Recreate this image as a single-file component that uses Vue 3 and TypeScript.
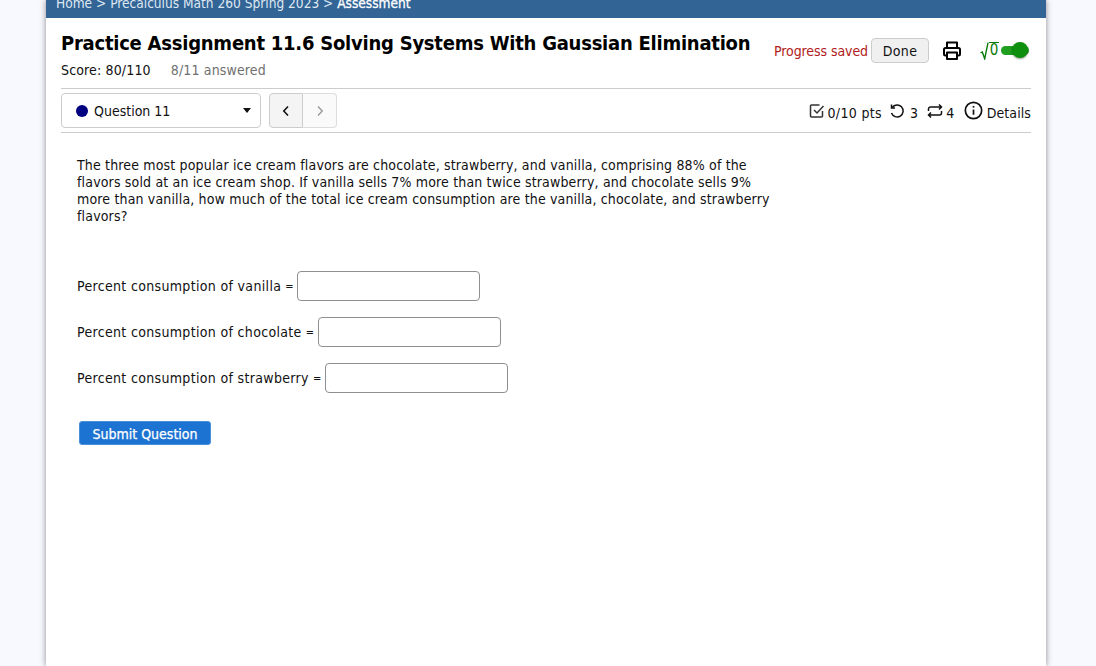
<template>
  <div class="page">
    <main class="container">
      <nav class="breadcrumb">
        <span>Home &gt; Precalculus Math 260 Spring 2023 &gt; </span><b>Assessment</b>
      </nav>
      <div class="content">
        <header class="head">
          <div class="head-left">
            <h1>Practice Assignment 11.6 Solving Systems With Gaussian Elimination</h1>
            <div class="score">
              <span>Score: 80/110</span>
              <span class="answered">8/11 answered</span>
            </div>
          </div>
          <div class="head-right">
            <span class="saved">Progress saved</span>
            <button class="done">Done</button>
            <svg class="print" width="18" height="19" viewBox="0 0 18 19" fill="none" stroke="#000" stroke-width="2" stroke-linejoin="round">
              <path d="M4 7V1.500h10V7" />
              <path d="M4 14.500H2.500A1.500 1.500 0 0 1 1 13V8.500A1.500 1.500 0 0 1 2.500 7h13A1.500 1.500 0 0 1 17 8.500V13a1.500 1.500 0 0 1-1.500 1.500H14" />
              <rect x="4" y="11.500" width="10" height="6.500" />
            </svg>
            <span class="math">
              <svg width="9" height="18" viewBox="0 0 9 18" fill="none" stroke="#0a7a0a" stroke-width="1.400"><path d="M0.500 11l1.800-1l2.400 6.800l3.300-16.100" /></svg>
              <span class="zero">0</span>
            </span>
            <span class="toggle"><span class="knob"></span></span>
          </div>
        </header>

        <div class="toolbar">
          <div class="select">
            <span class="dot"></span>
            <span class="select-label">Question 11</span>
            <span class="caret"></span>
          </div>
          <div class="pager">
            <button class="prev">
              <svg width="8" height="12" viewBox="0 0 8 12" fill="none" stroke="#111" stroke-width="1.600"><path d="M6 1.500L1.800 6L6 10.500" /></svg>
            </button>
            <button class="next">
              <svg width="8" height="12" viewBox="0 0 8 12" fill="none" stroke="#999" stroke-width="1.400"><path d="M2 1.500L6.200 6L2 10.500" /></svg>
            </button>
          </div>
          <div class="stats">
            <svg width="16" height="16" viewBox="0 0 16 16" fill="none" stroke="#333" stroke-width="1.500"><path d="M13.500 8v5a1 1 0 0 1-1 1H2.500a1 1 0 0 1-1-1V3a1 1 0 0 1 1-1h8" /><path d="M5 7l3 3l6.500-7" /></svg>
            <span class="stat-text">0/10 pts</span>
            <svg class="gap" width="16" height="16" viewBox="0 0 16 16" fill="none" stroke="#111" stroke-width="1.500"><path d="M3.200 4.500A6 6 0 1 1 2.500 10" /><path d="M2.500 1.500v3.500h3.500" /></svg>
            <span class="stat-text tight">3</span>
            <svg class="gap wide" width="16" height="16" viewBox="0 0 16 16" fill="none" stroke="#111" stroke-width="1.500"><path d="M1.500 8V6a2 2 0 0 1 2-2h11M12 1.500L14.500 4L12 6.500" /><path d="M14.500 8v2a2 2 0 0 1-2 2h-11M4 9.500L1.500 12L4 14.500" /></svg>
            <span class="stat-text">4</span>
            <svg class="gap wide info" width="19" height="19" viewBox="0 0 20 20" fill="none" stroke="#111" stroke-width="1.800"><circle cx="10" cy="10" r="8.600" /><path d="M10 9v5.500" /><path d="M10 5.200v1.800" /></svg>
            <span class="stat-text details">Details</span>
          </div>
        </div>

        <section class="question">
          <p class="prompt">The three most popular ice cream flavors are chocolate, strawberry, and vanilla, comprising 88% of the flavors sold at an ice cream shop. If vanilla sells 7% more than twice strawberry, and chocolate sells 9% more than vanilla, how much of the total ice cream consumption are the vanilla, chocolate, and strawberry flavors?</p>
          <div class="fields">
            <label v-for="f in fields" :key="f" class="field">
              <span>Percent consumption of {{ f }}</span>
              <span class="eq">=</span>
              <input type="text" />
            </label>
          </div>
          <button class="submit">Submit Question</button>
        </section>
      </div>
    </main>
  </div>
</template>

<script setup lang="ts">
const fields: string[] = ['vanilla', 'chocolate', 'strawberry']
</script>

<style>
html, body { margin: 0; background: #f8f8ff; }
</style>

<style scoped>
.page {
  height: 666px;
  overflow: hidden;
  background: #f8f8ff;
  font-family: "DejaVu Sans Condensed", "DejaVu Sans", sans-serif;
  font-size: 14px;
  letter-spacing: 0.33px;
  color: #111;
}
.container {
  width: 1000px;
  height: 666px;
  margin-left: 46px;
  background: #fff;
  box-shadow: 0 0 6px rgba(0, 0, 0, 0.45);
}
.breadcrumb {
  height: 18px;
  box-sizing: border-box;
  padding-left: 10px;
  background: #326496;
  color: #dfe8f1;
  font-size: 13.6px;
  letter-spacing: 0;
  line-height: 6px;
  overflow: hidden;
  white-space: nowrap;
}
.breadcrumb b { color: #fff; font-weight: 400; -webkit-text-stroke: 0.3px #fff; }
.content { padding: 0 15px; }
.head {
  display: flex;
  align-items: flex-start;
  height: 70px;
  border-bottom: 1px solid #ccc;
}
.head-left { padding-top: 12px; }
h1 {
  margin: 0;
  font-size: 20px;
  letter-spacing: -0.24px;
  line-height: 27px;
  font-weight: 700;
  color: #000;
  white-space: nowrap;
}
.score { margin-top: 5px; display: flex; gap: 20px; line-height: 17px; letter-spacing: 0.15px; }
.answered { color: #707070; }
.head-right {
  display: flex;
  align-items: center;
  flex-shrink: 0;
  margin-left: auto;
  margin-top: 20px;
  height: 25px;
}
.saved { color: #b01c20; margin-right: 3px; white-space: nowrap; letter-spacing: -0.08px; }
.done {
  width: 58px;
  height: 25px;
  padding: 0;
  background: #f0f0f0;
  border: 1px solid #ccc;
  border-radius: 4px;
  font: inherit;
  letter-spacing: inherit;
  color: #111;
}
.print { margin-left: 14px; }
.math { display: flex; align-items: center; margin-left: 19px; color: #0a7a0a; font-size: 15px; letter-spacing: 0; }
.zero {
  width: 10px;
  height: 15px;
  margin-top: -1px;
  border-top: 1.400px solid #0a7a0a;
  line-height: 15px;
  text-align: center;
}
.toggle {
  position: relative;
  width: 28px;
  height: 9px;
  margin-left: 2px;
  margin-right: 2px;
  border-radius: 5px;
  background: #1f9e1f;
}
.knob {
  position: absolute;
  right: 1px;
  top: -4px;
  width: 16px;
  height: 16px;
  border-radius: 50%;
  background: #0e8f0e;
  box-shadow: 0 1px 2px rgba(0,0,0,.4);
}
.toolbar {
  display: flex;
  align-items: center;
  height: 43px;
  border-bottom: 1px solid #ccc;
}
.select {
  display: flex;
  align-items: center;
  box-sizing: border-box;
  width: 200px;
  height: 35px;
  padding: 0 9px 0 14px;
  border: 1px solid #ccc;
  border-radius: 4px;
}
.dot { width: 12px; height: 12px; border-radius: 50%; background: #000080; margin-right: 6px; }
.select-label { flex: 1; letter-spacing: 0; }
.caret { border: 4px solid transparent; border-top: 5px solid #111; border-bottom: 0; }
.pager { display: flex; margin-left: 8px; }
.pager button {
  display: flex;
  align-items: center;
  justify-content: center;
  height: 35px;
  padding: 0;
  border: 1px solid #ddd;
}
.prev { width: 34px; background: #f4f4f4; border-color: #ccc !important; border-radius: 4px 0 0 4px; }
.next { width: 34px; background: #fafafa; border-left: 0 !important; border-radius: 0 4px 4px 0; }
.stats { display: flex; align-items: center; margin-left: auto; }
.stat-text { margin-left: 3px; padding-top: 4px; }
.stat-text.tight { margin-left: 5px; }
.stat-text.details { margin-left: 4px; letter-spacing: 0.1px; }
.gap { margin-left: 7px; }
.gap.wide { margin-left: 9px; }
.info { margin-top: -1px; }
.question { padding: 0 16px; }
.prompt {
  width: 700px;
  margin: 24px 0 0;
  line-height: 17px;
  letter-spacing: 0.16px;
}
.fields { margin-top: 46px; }
.field { display: flex; align-items: center; height: 30px; margin-bottom: 16px; white-space: nowrap; }
.eq { width: 8px; margin-left: 4px; font-size: 11px; }
.field input {
  box-sizing: border-box;
  width: 183px;
  height: 30px;
  margin-left: 4px;
  border: 1px solid #8f8f8f;
  border-radius: 4px;
  background: #fff;
}
.submit {
  display: block;
  width: 132px;
  height: 24px;
  margin: 28px 0 0 2px;
  padding: 1px 0 0;
  border: 1px solid #4a90d9;
  border-radius: 3px;
  background: #1d73d2;
  color: #fff;
  font: inherit;
  letter-spacing: 0;
  -webkit-text-stroke: 0.25px #fff;
}
</style>
